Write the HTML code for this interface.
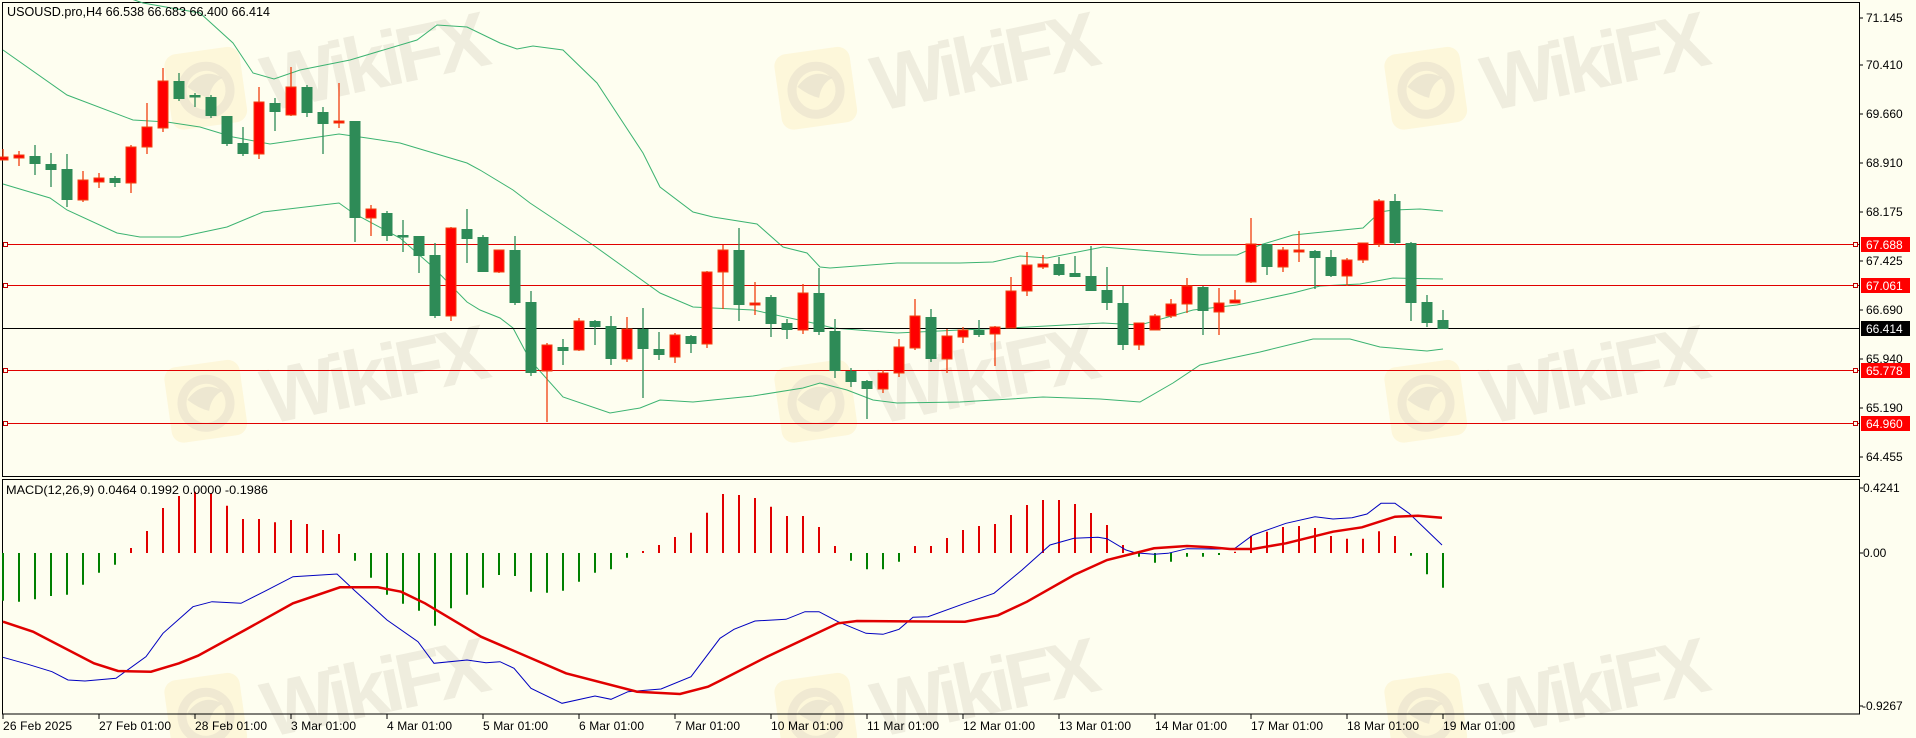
<!DOCTYPE html>
<html><head><meta charset="utf-8"><style>
html,body{margin:0;padding:0;background:#fefef0;}
svg{display:block;font-family:"Liberation Sans",sans-serif;}
</style></head><body>
<svg width="1916" height="738" viewBox="0 0 1916 738" xmlns="http://www.w3.org/2000/svg">
<rect width="1916" height="738" fill="#fefef0"/>
<defs>
<g id="wm">
 <g transform="rotate(-8 40 40)">
  <rect x="0" y="0" width="76" height="76" rx="12" fill="#fcf2cc" opacity="0.6"/>
  <circle cx="38" cy="40" r="24" fill="none" stroke="#e9e2cf" stroke-width="9" opacity="0.7"/>
  <path d="M20 34 Q38 16 56 30 Q44 34 40 48 Q30 44 20 34Z" fill="#e6dfcd" opacity="0.7"/>
 </g>
 <text x="96" y="62" font-size="78" font-weight="bold" fill="#e6e2d3" opacity="0.6" transform="rotate(-12 96 40)" textLength="230" font-family="Liberation Sans, sans-serif">WikiFX</text>
</g>
</defs>
<use href="#wm" x="168" y="50"/><use href="#wm" x="778" y="50"/><use href="#wm" x="1388" y="50"/>
<use href="#wm" x="168" y="363"/><use href="#wm" x="778" y="363"/><use href="#wm" x="1388" y="363"/>
<use href="#wm" x="168" y="676"/><use href="#wm" x="778" y="676"/><use href="#wm" x="1388" y="676"/>

<rect x="2.5" y="2.5" width="1857" height="474" fill="none" stroke="#000" stroke-width="1"/>
<rect x="2.5" y="479.5" width="1857" height="234.5" fill="none" stroke="#000" stroke-width="1"/>

<g fill="none" stroke="#3cb371" stroke-width="1">
<polyline points="120,-5 143,3 200,13 233,43 253,73 274,79 300,70 350,60 417,40 437,25 467,27 500,43 517,49 533,46 563,50 597,83 643,153 660,187 693,212 713,217 757,224 783,247 807,253 820,267 830,268 897,263 960,263 993,262 1020,256 1047,258 1103,247 1200,255 1237,255 1260,245 1293,235 1343,230 1363,228 1380,212 1393,210 1420,209 1443,211"/>
<polyline points="3,50 67,95 133,120 167,122 200,127 233,137 270,144 339,134 367,138 400,143 467,163 480,170 513,190 530,203 593,245 660,293 693,307 753,310 813,323 833,328 897,333 960,330 1010,328 1103,323 1140,325 1193,310 1237,305 1293,293 1320,286 1360,284 1393,278 1443,279"/>
<polyline points="3,184 50,198 67,210 117,233 140,237 180,237 227,227 263,212 339,203 353,213 400,238 433,267 467,302 480,310 500,318 513,328 530,360 563,397 610,413 640,408 660,400 693,402 753,396 803,388 820,383 847,390 873,400 897,403 960,402 1043,397 1100,399 1140,402 1173,383 1200,365 1227,359 1260,352 1313,339 1350,339 1380,347 1427,351 1443,349"/>
</g>

<g stroke="#e00000" stroke-width="1">
<line x1="3" x2="1859" y1="244.5" y2="244.5"/>
<line x1="3" x2="1859" y1="285.5" y2="285.5"/>
<line x1="3" x2="1859" y1="370.5" y2="370.5"/>
<line x1="3" x2="1859" y1="423.5" y2="423.5"/>
</g>
<line x1="3" x2="1859" y1="328.5" y2="328.5" stroke="#000" stroke-width="1"/>
<g fill="#fefef0" stroke="#c00000" stroke-width="1">
<rect x="3.5" y="242.5" width="4" height="4"/><rect x="3.5" y="283.5" width="4" height="4"/>
<rect x="3.5" y="368.5" width="4" height="4"/><rect x="3.5" y="421.5" width="4" height="4"/>
<rect x="1853.5" y="242.5" width="4" height="4"/><rect x="1853.5" y="283.5" width="4" height="4"/>
<rect x="1853.5" y="368.5" width="4" height="4"/><rect x="1853.5" y="421.5" width="4" height="4"/>
</g>

<g stroke="#2e8b57" stroke-width="1.3" fill="none">
<path d="M35 145V175M51 153V187M67 154V207M115 176V187M179 73V101M195 93V107M211 95V118M227 116V146M243 127V156M275 98V131M307 85V117M323 107V154M355 121V242M387 211V241M403 220V252M419 236V273M435 243V318M467 209V263M483 235V272M515 236V305M531 291V376M563 339V365M595 320V345M611 316V365M643 308V398M659 332V360M691 335V353M739 228V321M771 295V337M787 319V339M819 268V335M835 319V378M851 368V387M867 380V419M931 309V362M979 320V337M1059 257V276M1075 256V277M1091 246V291M1107 267V310M1123 286V350M1203 286V335M1267 244V275M1315 250V289M1331 250V277M1395 194V245M1411 242V321M1427 295V327M1443 310V329"/>
</g>
<g fill="#2e8b57">
<rect x="29.5" y="156" width="11" height="8"/><rect x="45.5" y="164" width="11" height="6"/><rect x="61.5" y="169" width="11" height="31"/><rect x="109.5" y="178" width="11" height="5"/><rect x="173.5" y="81" width="11" height="18"/><rect x="189.5" y="95" width="11" height="2.5"/><rect x="205.5" y="97" width="11" height="19"/><rect x="221.5" y="116" width="11" height="28"/><rect x="237.5" y="143" width="11" height="11"/><rect x="269.5" y="103" width="11" height="9"/><rect x="301.5" y="87" width="11" height="26"/><rect x="317.5" y="112" width="11" height="12"/><rect x="349.5" y="121" width="11" height="97"/><rect x="381.5" y="213" width="11" height="23"/><rect x="397.5" y="235" width="11" height="2.5"/><rect x="413.5" y="236" width="11" height="20"/><rect x="429.5" y="255" width="11" height="61"/><rect x="461.5" y="229" width="11" height="10"/><rect x="477.5" y="237" width="11" height="35"/><rect x="509.5" y="250" width="11" height="53"/><rect x="525.5" y="302" width="11" height="71"/><rect x="557.5" y="347" width="11" height="4"/><rect x="589.5" y="321" width="11" height="6"/><rect x="605.5" y="326" width="11" height="33"/><rect x="637.5" y="329" width="11" height="20"/><rect x="653.5" y="349" width="11" height="6"/><rect x="685.5" y="336" width="11" height="8"/><rect x="733.5" y="250" width="11" height="55"/><rect x="765.5" y="297" width="11" height="27"/><rect x="781.5" y="323" width="11" height="7"/><rect x="813.5" y="293" width="11" height="39"/><rect x="829.5" y="331" width="11" height="40"/><rect x="845.5" y="371" width="11" height="11"/><rect x="861.5" y="381" width="11" height="8"/><rect x="925.5" y="317" width="11" height="42"/><rect x="973.5" y="330" width="11" height="5"/>
<rect x="1053.5" y="264" width="11" height="11"/><rect x="1069.5" y="273" width="11" height="4"/><rect x="1085.5" y="276" width="11" height="15"/><rect x="1101.5" y="290" width="11" height="13"/><rect x="1117.5" y="303" width="11" height="42"/><rect x="1197.5" y="287" width="11" height="24"/><rect x="1261.5" y="244" width="11" height="23"/><rect x="1309.5" y="251" width="11" height="7"/><rect x="1325.5" y="257" width="11" height="19"/><rect x="1389.5" y="201" width="11" height="42"/><rect x="1405.5" y="243" width="11" height="60"/><rect x="1421.5" y="302" width="11" height="21"/><rect x="1437.5" y="320" width="11" height="9"/>
</g>
<g stroke="#f04010" stroke-width="1.3" fill="none">
<path d="M3 149V160M19 151V166M83 171V202M99 173V188M131 145V193M147 103V154M163 68V132M259 87V159M291 67V116M339 83V128M371 205V236M451 227V321M499 250V273M547 343V422M579 318V351M627 317V362M675 333V363M707 271V348M723 245V309M755 282V315M803 284V334M883 370V393M899 339V377M915 299V350M947 329V373M963 327V343M995 326V366M1011 277V328M1027 252V296M1043 255V269M1139 323V350M1155 314V330M1171 299V318M1187 278V313M1219 288V335M1235 290V303M1251 218V283M1283 247V272M1299 231V262M1347 258V286M1363 243V263M1379 199V247"/>
</g>
<g fill="#ff0000" stroke="#f04010" stroke-width="1">
<rect x="-2" y="157" width="10" height="3"/><rect x="14" y="155" width="10" height="3"/><rect x="78" y="180" width="10" height="20"/><rect x="94" y="178" width="10" height="4"/><rect x="126" y="147" width="10" height="36"/><rect x="142" y="127" width="10" height="20"/><rect x="158" y="81" width="10" height="47"/><rect x="254" y="102" width="10" height="52"/><rect x="286" y="87" width="10" height="28"/><rect x="334" y="121" width="10" height="2"/><rect x="366" y="209" width="10" height="9"/><rect x="446" y="228" width="10" height="88"/><rect x="494" y="250" width="10" height="22"/><rect x="542" y="345" width="10" height="26"/><rect x="574" y="321" width="10" height="29"/><rect x="622" y="329" width="10" height="30"/><rect x="670" y="335" width="10" height="22"/><rect x="702" y="272" width="10" height="72"/><rect x="718" y="250" width="10" height="22"/><rect x="750" y="303" width="10" height="2"/><rect x="798" y="293" width="10" height="37"/><rect x="878" y="373" width="10" height="16"/><rect x="894" y="347" width="10" height="26"/><rect x="910" y="316" width="10" height="32"/><rect x="942" y="336" width="10" height="23"/><rect x="958" y="330" width="10" height="7"/><rect x="990" y="327" width="10" height="7"/><rect x="1006" y="291" width="10" height="37"/><rect x="1022" y="265" width="10" height="26"/><rect x="1038" y="264" width="10" height="3"/>
<rect x="1134" y="323" width="10" height="22"/><rect x="1150" y="316" width="10" height="14"/><rect x="1166" y="304" width="10" height="12"/><rect x="1182" y="286" width="10" height="18"/><rect x="1214" y="303" width="10" height="9"/><rect x="1230" y="300" width="10" height="3"/><rect x="1246" y="244" width="10" height="38"/><rect x="1278" y="250" width="10" height="17"/><rect x="1294" y="250" width="10" height="2"/><rect x="1342" y="260" width="10" height="16"/><rect x="1358" y="243" width="10" height="17"/><rect x="1374" y="201" width="10" height="43"/>
</g>

<text x="7" y="16" font-size="12.5" fill="#000" textLength="263" lengthAdjust="spacingAndGlyphs">USOUSD.pro,H4  66.538 66.683 66.400 66.414</text>

<g stroke="#000" stroke-width="1">
<path d="M1859 18H1863M1859 65H1863M1859 114H1863M1859 163H1863M1859 212H1863M1859 261H1863M1859 310H1863M1859 359H1863M1859 408H1863M1859 457H1863M1859 488H1863M1859 553H1863M1859 706H1863"/>
</g>
<g font-size="12" fill="#000">
<text x="1866" y="22">71.145</text><text x="1866" y="69">70.410</text><text x="1866" y="118">69.660</text><text x="1866" y="167">68.910</text><text x="1866" y="216">68.175</text><text x="1866" y="265">67.425</text><text x="1866" y="314">66.690</text><text x="1866" y="363">65.940</text><text x="1866" y="412">65.190</text><text x="1866" y="461">64.455</text>
<text x="1863" y="492">0.4241</text><text x="1863" y="557">0.00</text><text x="1862" y="710">-0.9267</text>
</g>
<rect x="1861" y="237" width="49" height="15" fill="#ff0000"/>
<rect x="1861" y="278" width="49" height="15" fill="#ff0000"/>
<rect x="1861" y="321" width="49" height="15" fill="#000"/>
<rect x="1861" y="363" width="49" height="15" fill="#ff0000"/>
<rect x="1861" y="416" width="49" height="15" fill="#ff0000"/>
<g font-size="12" fill="#fff">
<text x="1866" y="249">67.688</text><text x="1866" y="290">67.061</text><text x="1866" y="333">66.414</text><text x="1866" y="375">65.778</text><text x="1866" y="428">64.960</text>
</g>

<g stroke="#008000" stroke-width="2">
<path d="M3 553V600.7M19 553V601.7M35 553V599.3M51 553V596M67 553V594.7M83 553V584.7M99 553V572.7M115 553V564.7M355 553V560.7M371 553V577.7M387 553V594.7M403 553V603.7M419 553V610.7M435 553V625.7M451 553V608.3M467 553V594.7M483 553V587.7M499 553V575M515 553V576M531 553V591.7M547 553V592.7M563 553V590.7M579 553V581.7M595 553V572.7M611 553V569.3M627 553V557.7M851 553V560.7M867 553V569.3M883 553V569.3M899 553V561.7M1139 553V556.7M1155 553V562.7M1171 553V561.7M1187 553V556.7M1203 553V556.7M1219 553V555M1411 553V555.7M1427 553V574.3M1443 553V587.7"/>
</g>
<g stroke="#e00000" stroke-width="2">
<path d="M131 553V548M147 553V531M163 553V508M179 553V496M195 553V491.7M211 553V493.3M227 553V505.7M243 553V519M259 553V519M275 553V522.3M291 553V520M307 553V524M323 553V530M339 553V534M643 553V551M659 553V545M675 553V537M691 553V532.7M707 553V512.7M723 553V494M739 553V495M755 553V498M771 553V506.7M787 553V516M803 553V516M819 553V527M835 553V546M915 553V546M931 553V546M947 553V538M963 553V530M979 553V526M995 553V524M1011 553V515M1027 553V505M1043 553V500M1059 553V500M1075 553V504M1091 553V513M1107 553V525M1123 553V545M1235 553V551.7M1251 553V535.7M1267 553V531.7M1283 553V527M1299 553V526M1315 553V528M1331 553V536M1347 553V538.7M1363 553V538.7M1379 553V531.3M1395 553V536"/>
</g>
<polyline fill="none" stroke="#0000c0" stroke-width="1" points="3,657.3 28,664.3 52,671.7 68,680 85,681 116,678.3 146,656.7 163,633.3 193,606.7 212,601.7 241,603.3 264,591.7 293,576.7 337,574 354,590 387,620 418,641.7 434,663.3 467,660 486,662.7 500,661.7 514,668.3 531,688.3 562,703.3 595,696 611,699.3 628,691.7 661,689 691,676.7 720,638.3 734,629.3 755,621 786,619.3 805,611.7 819,611.7 838,621.7 866,633.3 883,634.3 899,629.3 913,617.3 928,616.7 965,603.3 994,593.3 1022,570 1050,545 1074,538.3 1098,537.3 1107,538.7 1126,550 1135,552.7 1154,554.3 1168,553.3 1187,548.7 1216,549 1234,549 1253,535 1286,523.3 1315,516.7 1333,519 1352,517.7 1367,514 1381,503.3 1395,503.3 1409,513.3 1442,545"/>
<polyline fill="none" stroke="#e00000" stroke-width="2.5" points="3,621.7 33,631.7 94,663.3 118,671 151,671.7 179,663.3 198,655.7 245,630 293,603.3 340,587.3 378,587.3 401,591.7 425,603.3 481,636.7 566,673.3 637,691.7 680,694 708,686.7 720,680.7 767,656.7 838,623.3 857,621 965,621.7 998,615.3 1027,601.7 1074,575 1107,560 1154,548.3 1187,546 1211,547.3 1230,549 1253,549 1286,543.3 1333,531.7 1362,527.3 1395,516.7 1418,515.7 1442,517.7"/>
<text x="6" y="494" font-size="12" fill="#000" textLength="262" lengthAdjust="spacingAndGlyphs">MACD(12,26,9) 0.0464 0.1992 0.0000 -0.1986</text>

<g stroke="#000" stroke-width="1">
<path d="M3 714V719M99 714V719M195 714V719M291 714V719M387 714V719M483 714V719M579 714V719M675 714V719M771 714V719M867 714V719M963 714V719M1059 714V719M1155 714V719M1251 714V719M1347 714V719M1443 714V719"/>
</g>
<g font-size="12" fill="#000" lengthAdjust="spacingAndGlyphs">
<text x="3" y="730" textLength="69">26 Feb 2025</text>
<text x="99" y="730" textLength="72">27 Feb 01:00</text>
<text x="195" y="730" textLength="72">28 Feb 01:00</text>
<text x="291" y="730" textLength="65">3 Mar 01:00</text>
<text x="387" y="730" textLength="65">4 Mar 01:00</text>
<text x="483" y="730" textLength="65">5 Mar 01:00</text>
<text x="579" y="730" textLength="65">6 Mar 01:00</text>
<text x="675" y="730" textLength="65">7 Mar 01:00</text>
<text x="771" y="730" textLength="72">10 Mar 01:00</text>
<text x="867" y="730" textLength="72">11 Mar 01:00</text>
<text x="963" y="730" textLength="72">12 Mar 01:00</text>
<text x="1059" y="730" textLength="72">13 Mar 01:00</text>
<text x="1155" y="730" textLength="72">14 Mar 01:00</text>
<text x="1251" y="730" textLength="72">17 Mar 01:00</text>
<text x="1347" y="730" textLength="72">18 Mar 01:00</text>
<text x="1443" y="730" textLength="72">19 Mar 01:00</text>
</g>
</svg>
</body></html>
